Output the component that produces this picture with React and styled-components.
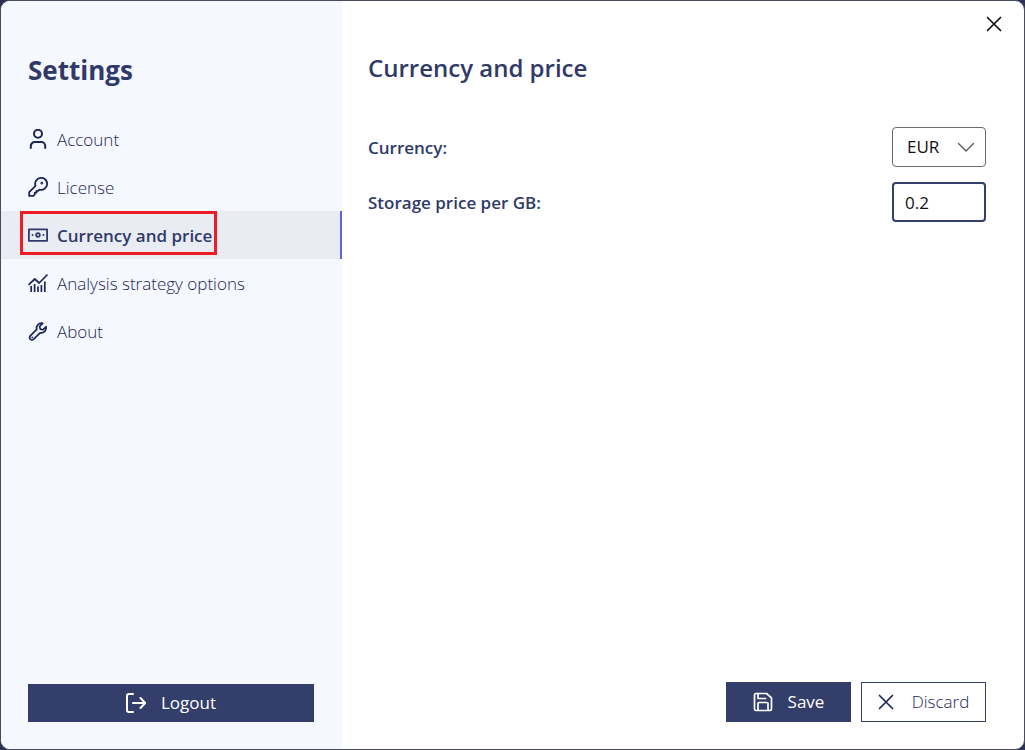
import React, { useState } from 'react'
import styled, { createGlobalStyle } from 'styled-components'

const navy = '#343e6b'
const ink = '#2f3a69'

const GlobalStyle = createGlobalStyle`
    * {
        box-sizing: border-box;
    }
    body {
        margin: 0;
        background: #2d3152;
        font-family: "Open Sans", "Noto Sans", sans-serif;
        font-size: 17px;
        line-height: 24px;
        color: ${ink};
    }
    button, input, select {
        font: inherit;
    }
`

const Window = styled.div`
    display: grid;
    grid-template-columns: 1fr 2fr;
    min-height: 100vh;
    border: 1px solid #4a4b62;
    border-radius: 10px;
    background: #ffffff;
    overflow: hidden;
`

const Sidebar = styled.aside`
    display: flex;
    flex-direction: column;
    justify-content: space-between;
    padding-bottom: 27px;
    background: #f5f8fe;
`

const SidebarTitle = styled.h1`
    margin: 0;
    padding: 52px 27px 28px;
    font-size: 26px;
    line-height: 34px;
    font-weight: 700;
`

const NavLink = styled.a`
    position: relative;
    display: flex;
    align-items: center;
    gap: 9px;
    height: 48px;
    padding-left: 27px;
    border-right: 2px solid ${p => p.$active ? '#6a5fd6' : 'transparent'};
    background: ${p => p.$active ? '#eaecf4' : 'transparent'};
    color: ${p => p.$active ? ink : '#1c2658'};
    font-weight: ${p => p.$active ? 600 : 300};
    text-decoration: none;
`

const NavText = styled.span`
    padding-top: 2px;
`

const Highlight = styled.span`
    position: absolute;
    top: 0;
    left: 19px;
    width: 197px;
    height: 44px;
    border: 3px solid #ee1c25;
`

const Icon = styled.svg`
    flex: none;
    width: ${p => p.$size || 20}px;
    height: ${p => p.$size || 20}px;
    fill: none;
    stroke: currentColor;
    stroke-width: ${p => p.$stroke || 2};
    stroke-linecap: round;
    stroke-linejoin: round;
`

const Button = styled.button`
    display: flex;
    align-items: center;
    justify-content: center;
    gap: 15px;
    height: 40px;
    min-width: 125px;
    padding: 0 8px;
    border: 1px solid ${navy};
    background: ${navy};
    color: #ffffff;
`

const DiscardButton = styled(Button)`
    gap: 18px;
    background: #ffffff;
    color: #1c2658;
    font-weight: 300;
`

const LogoutButton = styled(Button)`
    height: 38px;
    margin: 0 28px 0 27px;
`

const Main = styled.main`
    display: flex;
    flex-direction: column;
`

const TitleBar = styled.div`
    display: flex;
    justify-content: flex-end;
    padding: 8px 15px;
`

const CloseButton = styled.button`
    display: flex;
    align-items: center;
    justify-content: center;
    width: 30px;
    height: 30px;
    padding: 0;
    border: 0;
    background: none;
    color: #111111;
`

const Form = styled.form`
    flex: 1;
    display: flex;
    flex-direction: column;
    padding: 4px 38px 27px 26px;
`

const FormTitle = styled.h2`
    margin: 0 0 42px;
    font-size: 24px;
    line-height: 34px;
    font-weight: 600;
`

const Field = styled.div`
    display: flex;
    align-items: center;
    justify-content: space-between;
    margin-bottom: 15px;
`

const Label = styled.label`
    padding-top: 2px;
    font-weight: 600;
`

const SelectBox = styled.div`
    position: relative;
    width: 94px;
`

const Select = styled.select`
    appearance: none;
    display: block;
    width: 100%;
    height: 40px;
    padding: 0 30px 0 14px;
    border: 1px solid #6b6b6b;
    border-radius: 4px;
    background: #ffffff;
    color: #111111;
`

const SelectArrow = styled(Icon)`
    position: absolute;
    top: 10px;
    right: 10px;
    color: #555555;
    pointer-events: none;
`

const Input = styled.input`
    width: 94px;
    height: 40px;
    padding: 0 11px;
    border: 2px solid ${navy};
    border-radius: 4px;
    outline: none;
    background: #ffffff;
    color: #111111;
`

const Actions = styled.div`
    display: flex;
    justify-content: flex-end;
    gap: 10px;
    margin-top: auto;
`

const AccountIcon = () => (
    <Icon viewBox="0 0 20 20">
        <circle cx="10" cy="4.8" r="4" />
        <path d="M2.8 19v-2a4 4 0 0 1 4-4h6.4a4 4 0 0 1 4 4v2" />
    </Icon>
)

const LicenseIcon = () => (
    <Icon viewBox="0 0 20 20" $stroke={1.8}>
        <path d="M7.5 8.8a6 6 0 1 1 4 3.8l-1.2 1.2H8.5v1.9H6.8v1.7l-1.4 1.5H1.2v-3.8z" />
        <circle cx="13.8" cy="6.2" r="0.5" />
    </Icon>
)

const PriceIcon = () => (
    <Icon viewBox="0 0 20 20" $stroke={1.8}>
        <rect x="0.9" y="4.4" width="18.2" height="11.4" />
        <circle cx="10" cy="10" r="1.8" />
        <path d="M4.5 10h.1M15.4 10h.1" />
    </Icon>
)

const AnalysisIcon = () => (
    <Icon viewBox="0 0 20 20" $stroke={1.7}>
        <path d="M1 11.3 6.8 6l4.4 4L19 2" />
        <path d="M3.2 13v6M6.6 11v8M10 13.5V19M13.4 12v7M16.8 8.5V19" strokeLinecap="butt" />
    </Icon>
)

const AboutIcon = () => (
    <Icon viewBox="0 0 20 20" $stroke={1.7}>
        <path d="M14.7 2.3a5 5 0 0 0-6 6.1L2.3 14.8a2.4 2.4 0 0 0 3.4 3.4l6.4-6.4a5 5 0 0 0 6-6.1l-3.2 3.1-2.6-.7-.7-2.6z" />
        <path d="M4.2 16.3h.1" />
    </Icon>
)

const LogoutIcon = () => (
    <Icon viewBox="0 0 20 20">
        <path d="M7 1H3a2 2 0 0 0-2 2v14a2 2 0 0 0 2 2h4M7 10h12M14.5 5l4.7 5-4.7 5" />
    </Icon>
)

const SaveIcon = () => (
    <Icon viewBox="0 0 20 20" $stroke={1.7}>
        <path d="M3 1.5h10.5l5 4.3V17a1.5 1.5 0 0 1-1.5 1.5H3A1.5 1.5 0 0 1 1.5 17V3A1.5 1.5 0 0 1 3 1.5z" />
        <path d="M5 2v4.5h7.5M5 18v-6.5a1 1 0 0 1 1-1h8a1 1 0 0 1 1 1V18" />
    </Icon>
)

const CrossIcon = () => (
    <Icon viewBox="0 0 16 16" $size={16} $stroke={1.7}>
        <path d="M1.5 1.5l13 13M14.5 1.5l-13 13" />
    </Icon>
)

const links = [
    { id: 'account', label: 'Account', icon: AccountIcon },
    { id: 'license', label: 'License', icon: LicenseIcon },
    { id: 'price', label: 'Currency and price', icon: PriceIcon },
    { id: 'analysis', label: 'Analysis strategy options', icon: AnalysisIcon },
    { id: 'about', label: 'About', icon: AboutIcon },
]

const SettingsNav = ({ active }) => (
    <nav>
        {links.map(({ id, label, icon: LinkIcon }) => (
            <NavLink key={id} href={`#${id}`} $active={id === active}>
                <LinkIcon />
                <NavText>{label}</NavText>
                {id === active && <Highlight />}
            </NavLink>
        ))}
    </nav>
)

const App = () => {
    const [currency, setCurrency] = useState('EUR')
    const [price, setPrice] = useState('0.2')

    return (
        <Window>
            <GlobalStyle />
            <Sidebar>
                <div>
                    <SidebarTitle>Settings</SidebarTitle>
                    <SettingsNav active="price" />
                </div>
                <LogoutButton type="button"><LogoutIcon />Logout</LogoutButton>
            </Sidebar>
            <Main>
                <TitleBar>
                    <CloseButton type="button" aria-label="Close"><CrossIcon /></CloseButton>
                </TitleBar>
                <Form onSubmit={e => e.preventDefault()}>
                    <FormTitle>Currency and price</FormTitle>
                    <Field>
                        <Label htmlFor="currency">Currency:</Label>
                        <SelectBox>
                            <Select id="currency" value={currency} onChange={e => setCurrency(e.target.value)}>
                                <option>EUR</option>
                                <option>USD</option>
                            </Select>
                            <SelectArrow viewBox="0 0 20 20" $stroke={1.3}>
                                <path d="M2.5 6.5l7.5 7.5 7.5-7.5" />
                            </SelectArrow>
                        </SelectBox>
                    </Field>
                    <Field>
                        <Label htmlFor="price">Storage price per GB:</Label>
                        <Input id="price" value={price} onChange={e => setPrice(e.target.value)} />
                    </Field>
                    <Actions>
                        <Button type="submit"><SaveIcon />Save</Button>
                        <DiscardButton type="button"><CrossIcon />Discard</DiscardButton>
                    </Actions>
                </Form>
            </Main>
        </Window>
    )
}

export default App
